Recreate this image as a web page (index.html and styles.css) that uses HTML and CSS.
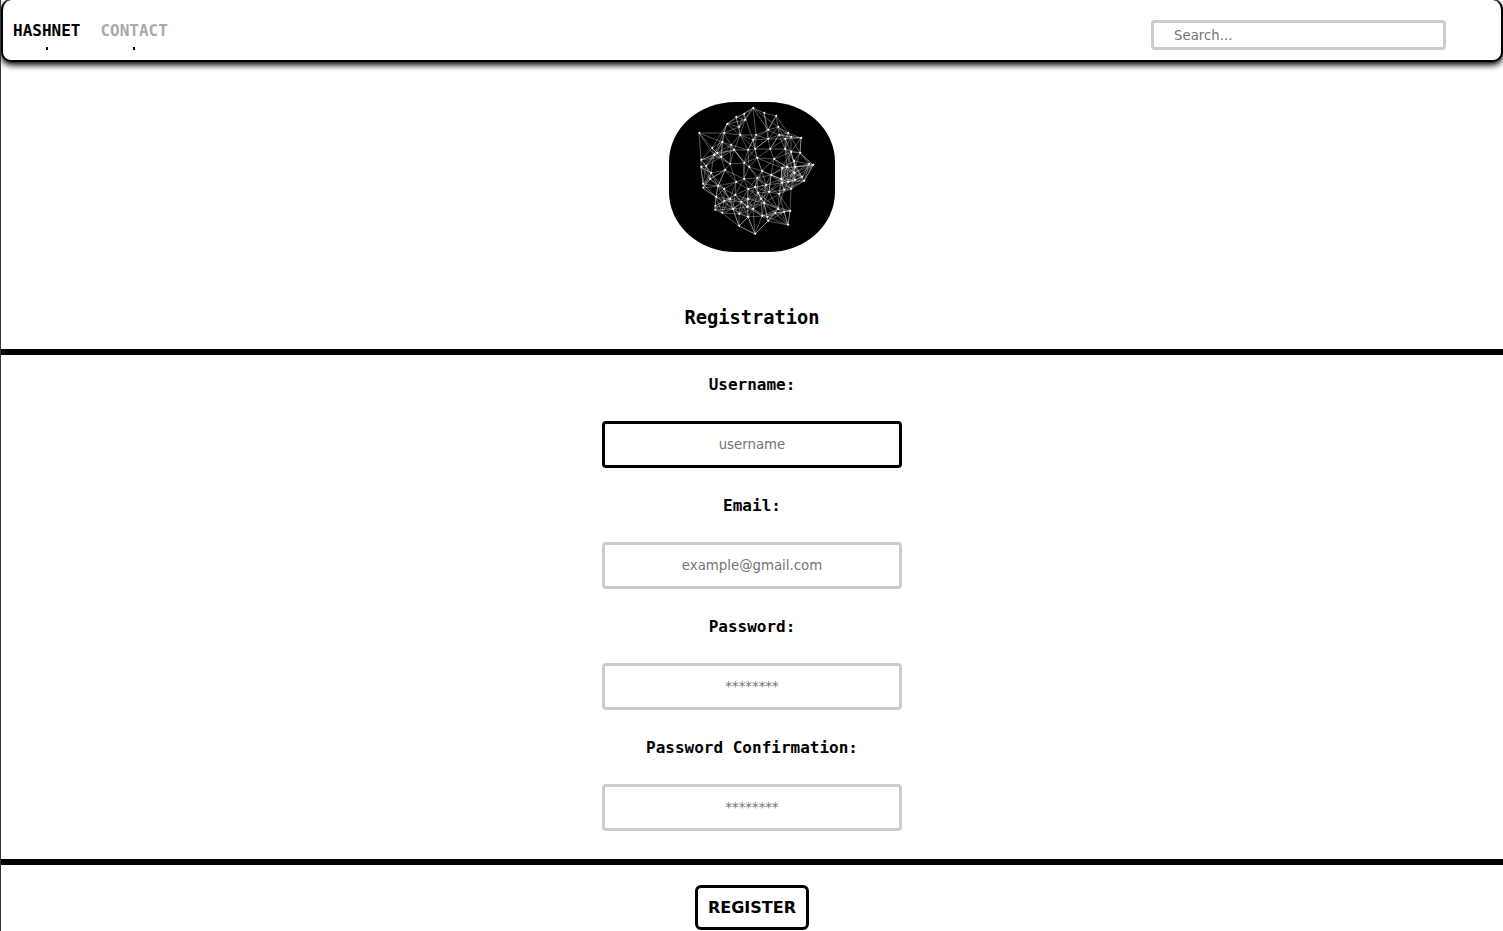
FILE: index.html
```html
<!DOCTYPE html>
<html lang="en">
<head>
<meta charset="utf-8">
<title>Registration</title>
<link rel="stylesheet" href="styles.css">
</head>
<body>
<nav class="nav">
  <div class="links">
    <a class="link active">HASHNET</a>
    <a class="link">CONTACT</a>
  </div>
  <input class="search" type="text" placeholder="Search...">
</nav>
<main class="page">
  <div class="logo"><svg id="mesh" width="166" height="150" viewBox="0 0 166 150"></svg></div>
  <h1 class="title">Registration</h1>
  <form class="form">
    <label class="label" for="user">Username:</label>
    <input class="field current" id="user" type="text" placeholder="username">
    <label class="label" for="email">Email:</label>
    <input class="field" id="email" type="text" placeholder="example@gmail.com">
    <label class="label" for="pass">Password:</label>
    <input class="field" id="pass" type="password" placeholder="********">
    <label class="label" for="confirm">Password Confirmation:</label>
    <input class="field" id="confirm" type="password" placeholder="********">
  </form>
  <button class="register" type="button">REGISTER</button>
</main>
<script src="mesh.js"></script>
</body>
</html>
```

FILE: styles.css
```css
* { box-sizing: border-box; }
body {
  margin: 0;
  height: 931px;
  overflow: hidden;
  border-left: 1px solid #3b3238;
  background: #fff;
  color: #000;
  font-family: "DejaVu Sans Mono", monospace;
}
.nav {
  display: flex;
  justify-content: space-between;
  align-items: flex-start;
  height: 62px;
  padding: 20px 55px 0 10px;
  border: 2px solid #000;
  border-top: 0;
  border-radius: 10px;
  background: #fff;
  box-shadow: 0 -1px 0 #3b3238, 0 3px 6px #000;
}
.links { display: flex; gap: 20px; }
.link {
  display: flex;
  flex-direction: column;
  align-items: center;
  color: #aaa;
  font-size: 16px;
  font-weight: bold;
  line-height: 22px;
}
.link::after {
  content: "";
  width: 2px;
  height: 3px;
  margin-top: 5px;
  background: #000;
}
.link.active { color: #000; }
.search, .field {
  border: 3px solid #ccc;
  border-radius: 4px;
  outline: 0;
  background: #fff;
  font-family: "DejaVu Sans", sans-serif;
  font-size: 13.333px;
}
.search::placeholder, .field::placeholder { color: #757575; }
.search { width: 295px; height: 30px; padding: 0 20px; }
.page { display: flex; flex-direction: column; align-items: center; }
.logo {
  width: 166px;
  height: 150px;
  margin-top: 40px;
  border-radius: 40%;
  overflow: hidden;
  background: #000;
}
.mesh-line { fill: none; stroke: #fff; stroke-opacity: .55; stroke-width: .6; }
.mesh-node { fill: #fff; }
.title { margin: 55px 0 0; font-size: 18.72px; line-height: 22px; }
.form {
  display: flex;
  flex-direction: column;
  align-items: center;
  align-self: stretch;
  height: 516px;
  margin-top: 20px;
  padding-top: 20px;
  border-top: 6px solid #000;
  border-bottom: 6px solid #000;
}
.label { font-size: 16px; font-weight: bold; line-height: 19px; }
.field { width: 300px; height: 47px; margin: 27px 0 28px; text-align: center; }
.field.current { border-color: #000; }
.register {
  width: 114px;
  height: 45px;
  margin-top: 20px;
  padding: 0;
  border: 3px solid #000;
  border-radius: 6px;
  background: #fff;
  color: #000;
  font: bold 16px "DejaVu Sans", sans-serif;
}
```

FILE: mesh.js
```js
// Vertices of the wireframe globe in the logo.
const nodes = [
  [30,31],[58,22],[67,15],[75,12],[70,25],[76,18],[55,31],[71,33],[53,40],[62,43],[43,46],[65,48],
  [45,53],[52,55],[48,51],[32,58],[32,65],[37,64],[56,68],[61,62],[79,48],[75,61],[80,65],[42,71],
  [84,6],[95,11],[107,14],[109,25],[99,28],[119,31],[132,36],[122,35],[87,33],[99,37],[110,33],[116,37],
  [84,38],[116,47],[101,47],[86,47],[122,50],[131,51],[88,56],[105,57],[113,66],[125,59],[140,62],[144,63],
  [126,65],[93,69],[118,65],[102,73],[125,71],[41,77],[34,86],[34,82],[47,95],[46,104],[46,108],[53,111],
  [55,99],[61,97],[64,107],[70,112],[70,124],[55,87],[49,84],[67,80],[75,77],[79,87],[66,93],[72,100],
  [78,105],[79,97],[79,115],[88,76],[97,83],[86,85],[89,91],[100,90],[92,97],[95,101],[113,81],[115,88],
  [110,92],[109,107],[121,109],[119,123],[86,132],[99,119],[98,115],[93,114],[106,111],[115,110],[84,107],
  [135,79],[126,78],[133,75],[119,80],[122,87],[112,77]
];
// Longer edges along the outline and across the globe.
const extra = [
  [[30,31],[55,31]],[[30,31],[53,40]],[[30,31],[43,46]],[[30,31],[32,58]],[[30,31],[45,53]],
  [[84,6],[58,22]],[[84,6],[87,33]],[[84,6],[99,28]],[[84,6],[109,25]],[[84,6],[70,25]],
  [[107,14],[119,31]],[[107,14],[99,28]],[[95,11],[99,37]],[[75,12],[84,38]],
  [[58,22],[43,46]],[[58,22],[45,53]],[[55,31],[52,55]],
  [[62,43],[75,61]],[[62,43],[61,62]],[[71,33],[86,47]],[[65,48],[80,65]],[[65,48],[45,53]],
  [[61,62],[67,80]],[[56,68],[75,77]],[[75,61],[75,77]],[[80,65],[97,83]],[[88,56],[93,69]],
  [[88,56],[113,66]],[[105,57],[118,65]],[[116,47],[125,71]],[[99,37],[86,47]],[[110,33],[101,47]],
  [[144,63],[126,65]],[[144,63],[125,71]],[[144,63],[131,51]],[[144,63],[135,79]],[[144,63],[119,80]],
  [[132,36],[131,51]],[[132,36],[110,33]],[[122,50],[126,65]],[[115,88],[135,79]],
  [[102,73],[100,90]],[[93,69],[112,77]],[[113,66],[112,77]],[[100,90],[109,107]],[[115,88],[109,107]],
  [[32,58],[52,55]],[[32,65],[42,71]],[[34,82],[32,65]],[[34,86],[47,95]],[[34,86],[41,77]],
  [[56,68],[41,77]],[[56,68],[49,84]],[[42,71],[55,87]],[[49,84],[47,95]],
  [[122,87],[121,109]],[[110,92],[119,123]],[[109,107],[119,123]],[[99,119],[119,123]],[[98,115],[119,123]],
  [[121,109],[119,123]],[[121,109],[110,92]],[[86,132],[70,124]],[[86,132],[79,115]],[[86,132],[93,114]],
  [[86,132],[99,119]],[[86,132],[84,107]],[[70,124],[53,111]],[[70,124],[64,107]],[[70,124],[79,115]],
  [[47,95],[64,107]],[[55,87],[64,107]],[[95,101],[121,109]],[[89,91],[109,107]]
];
const near = [];
nodes.forEach((a, i) => nodes.slice(i + 1).forEach(b => {
  if (Math.hypot(a[0] - b[0], a[1] - b[1]) < 18.5) near.push([a, b]);
}));
const line = near.concat(extra).map(([a, b]) => `M${a}L${b}`).join("");
// Each edge is its own path so that crossings build up brightness.
document.getElementById("mesh").innerHTML =
  line.split("M").slice(1).map(d => `<path class="mesh-line" d="M${d}"/>`).join("") +
  nodes.map(([x, y]) => `<circle class="mesh-node" cx="${x + .3}" cy="${y - .3}" r="1"/>`).join("");
```
